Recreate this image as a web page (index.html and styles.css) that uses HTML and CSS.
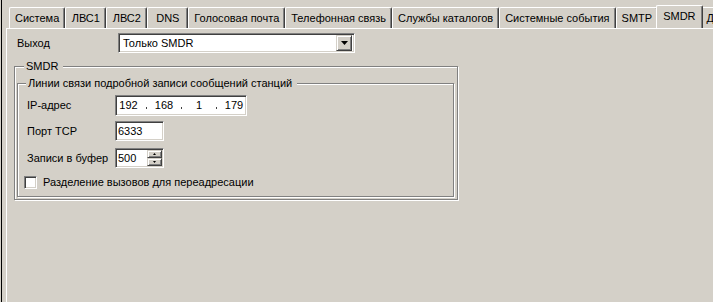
FILE: index.html
```html
<!DOCTYPE html>
<html lang="ru">
<head>
    <meta charset="UTF-8">
    <title>SMDR</title>
    <link rel="stylesheet" href="styles.css">
</head>
<body>

<div class="window">
    <div class="tabs">
        <div class="tab">Система</div>
        <div class="tab">ЛВС1</div>
        <div class="tab">ЛВС2</div>
        <div class="tab">DNS</div>
        <div class="tab">Голосовая почта</div>
        <div class="tab">Телефонная связь</div>
        <div class="tab">Службы каталогов</div>
        <div class="tab">Системные события</div>
        <div class="tab">SMTP</div>
        <div class="tab active">SMDR</div>
        <div class="tab">Дополнительно</div>
    </div>

    <div class="page">
        <div class="out-row">
            <span class="out-label">Выход</span>
            <div class="combo">
                <span class="combo-value">Только SMDR</span>
                <span class="combo-btn">
                    <svg width="7" height="4" viewBox="0 0 7 4"><path d="M0 0h7L3.5 4z" fill="#000"/></svg>
                </span>
            </div>
        </div>

        <fieldset class="group outer">
            <legend>SMDR</legend>
            <fieldset class="group inner">
                <legend>Линии связи подробной записи сообщений станций</legend>

                <div class="field-row ip-row">
                    <span class="field-label">IP-адрес</span>
                    <div class="edit ip">
                        <span class="ip-seg">192</span><span class="ip-dot"></span>
                        <span class="ip-seg">168</span><span class="ip-dot"></span>
                        <span class="ip-seg">1</span><span class="ip-dot"></span>
                        <span class="ip-seg">179</span>
                    </div>
                </div>

                <div class="field-row tcp-row">
                    <span class="field-label">Порт TCP</span>
                    <div class="edit short">6333</div>
                </div>

                <div class="field-row buf-row">
                    <span class="field-label">Записи в буфер</span>
                    <div class="edit short spin">
                        <span class="spin-value">500</span>
                        <span class="spin-btns">
                            <span class="spin-btn"><svg width="3" height="2" viewBox="0 0 3 2"><path d="M1.5 0L3 2H0z" fill="#000"/></svg></span>
                            <span class="spin-btn"><svg width="3" height="2" viewBox="0 0 3 2"><path d="M0 0h3L1.5 2z" fill="#000"/></svg></span>
                        </span>
                    </div>
                </div>

                <label class="check-row">
                    <span class="check"></span>
                    <span>Разделение вызовов для переадресации</span>
                </label>
            </fieldset>
        </fieldset>
    </div>
</div>

</body>
</html>
```

FILE: styles.css
```css
html, body { margin: 0; height: 100%; overflow: hidden; }
body { background: #d4d0c8; color: #000; font: 11px/13px "Liberation Sans", Arial, sans-serif; }

.window { margin-left: 1px; border-left: 1px solid #000; height: 302px; padding-left: 4px; overflow: hidden; }

.tabs { display: flex; height: 23px; padding: 5px 0 0 3px; white-space: nowrap; overflow: hidden; }
.tab { box-sizing: border-box; min-width: 41px; height: 21px; margin-top: 2px; padding: 4px 5px 0 5px; text-align: center; border-top: 1px solid #fff; border-left: 1px solid #fff; border-right: 1px solid #404040; box-shadow: inset -1px 0 #808080; border-top-left-radius: 2px; border-top-right-radius: 2px; background: #d4d0c8; flex: none; }
.tab.active { height: 24px; margin: 0 -2px; padding: 4px 6px 0 6px; position: relative; z-index: 1; }

.page { border-top: 1px solid #fff; border-left: 1px solid #fff; padding: 4px 0 0 7px; height: 300px; }

.out-row { display: flex; align-items: center; height: 20px; padding-left: 3px; }
.out-label { width: 101px; }

.edit, .combo { box-sizing: border-box; background: #fff; border: 1px solid; border-color: #808080 #fff #fff #808080; box-shadow: inset 1px 1px #404040, inset -1px -1px #d4d0c8; }
.combo { display: flex; align-items: center; width: 237px; height: 20px; padding: 2px 2px 2px 4px; }
.combo-value { flex: 1; }
.combo-btn { box-sizing: border-box; width: 16px; height: 16px; display: flex; align-items: center; justify-content: center; background: #d4d0c8; border: 1px solid; border-color: #d4d0c8 #404040 #404040 #d4d0c8; box-shadow: inset 1px 1px #fff, inset -1px -1px #808080; }

.group { border: 1px solid #808080; box-shadow: inset 1px 1px #fff, 1px 1px #fff; padding: 0; min-width: 0; }
.group legend { background: #d4d0c8; line-height: 13px; }
.outer { width: 444px; box-sizing: border-box; margin: 7px 0 0 0; padding: 0 0 2px 2px; }
.outer > legend { margin-left: 7px; padding: 0 5px 0 2px; }
.inner { width: 437px; box-sizing: border-box; margin: 4px 0 0 0; padding: 5px 0 7px 0; }
.inner > legend { margin-left: 8px; padding: 0 5px 0 2px; }

.field-row { display: flex; align-items: center; padding-left: 9px; }
.field-label { width: 88px; }
.ip-row { height: 21px; margin-bottom: 5px; }
.tcp-row { height: 20px; margin-bottom: 7px; }
.buf-row { height: 20px; margin-bottom: 8px; }

.edit { height: 100%; display: flex; align-items: center; padding: 0 2px; overflow: hidden; }
.ip { width: 132px; }
.ip-seg { box-sizing: border-box; flex: none; width: 34px; text-align: center; }
.ip-seg:first-child { width: 28px; padding-right: 7px; }
.ip-dot { flex: none; width: 1px; height: 2px; margin-top: 4px; background: #404040; }
.short { width: 49px; }
.spin { padding-right: 1px; }
.spin-value { flex: 1; }
.spin-btns { display: flex; flex-direction: column; }
.spin-btn { box-sizing: border-box; width: 15px; height: 8px; display: flex; align-items: center; justify-content: center; background: #d4d0c8; border: 1px solid; border-color: #d4d0c8 #404040 #404040 #d4d0c8; box-shadow: inset 1px 1px #fff, inset -1px -1px #808080; }

.check-row { display: flex; align-items: center; gap: 6px; height: 13px; padding-left: 6px; }
.check { box-sizing: border-box; width: 13px; height: 13px; background: #fff; border: 1px solid; border-color: #808080 #fff #fff #808080; box-shadow: inset 1px 1px #404040, inset -1px -1px #d4d0c8; }
```
